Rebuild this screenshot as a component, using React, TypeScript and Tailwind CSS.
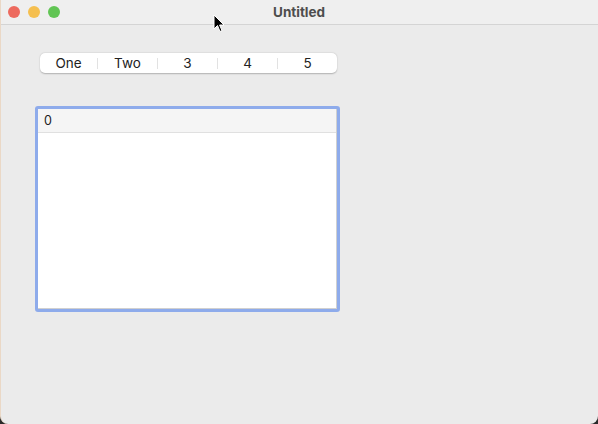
const segments = ['One', 'Two', '3', '4', '5'];

function Cursor() {
  return (
    <svg className="absolute left-[213px] top-[14px]" width="12" height="19" viewBox="0 0 12 19">
      <path d="M1 1 L1 15 L4.5 11.5 L7 17.5 L9 16.6 L6.6 11 L11 11 Z" fill="#000" stroke="#fff" strokeWidth="1" strokeLinejoin="round" />
    </svg>
  );
}

export default function App() {
  return (
    <div className="relative h-[424px] w-[598px] overflow-hidden bg-[#2a2a2a] font-['Inter','Liberation_Sans',sans-serif]">
      <div className="flex h-full w-full flex-col overflow-hidden rounded-b-[8px] border-l border-[#ead8c6] bg-[#ebebeb]">
        <div className="relative flex h-[25px] shrink-0 items-center border-b border-[#d4d4d4] bg-[#efefef]">
          <div className="flex items-center gap-[8px] pl-[7px]">
            <span className="h-[12px] w-[12px] rounded-full bg-[#ed6a5e]" />
            <span className="h-[12px] w-[12px] rounded-full bg-[#f5bf4f]" />
            <span className="h-[12px] w-[12px] rounded-full bg-[#61c554]" />
          </div>
          <div className="absolute left-[272px] top-[2px] text-[13.5px] font-bold text-[#4d4d4d]">Untitled</div>
        </div>

        <div className="flex flex-col pl-[39px] pt-[28px]">
          <div className="flex h-[20px] w-[297px] items-center rounded-[5px] bg-white shadow-[0_0.5px_1.5px_rgba(0,0,0,0.25)]">
            {segments.map((s, i) => (
              <div key={s} className="flex h-full items-center">
                {i > 0 && <span className="h-[11px] w-px bg-[#e2e2e2]" />}
                <span className={`${i === 0 ? 'w-[57px]' : 'w-[59px]'} text-center text-[13.5px] text-[#222]`}>{s}</span>
              </div>
            ))}
          </div>

          <div className="ml-[-5px] mt-[33px] h-[206px] w-[305px] rounded-[3px] border-[3.5px] border-[#8eabeb] bg-white">
            <div className="h-full w-full border border-[#d0d0d0] border-t-0 border-l-0">
              <div className="flex h-[24px] items-center border-b border-[#e0e0e0] bg-[#f5f5f5] pl-[6px] pt-[2px] text-[12.5px] text-[#222]">0</div>
            </div>
          </div>
        </div>
      </div>
      <Cursor />
    </div>
  );
}
